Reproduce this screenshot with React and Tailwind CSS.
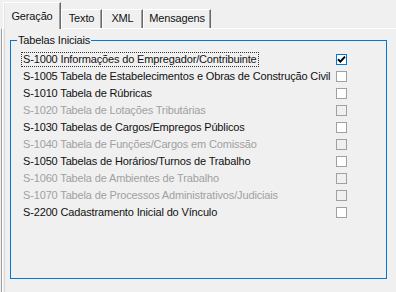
import React from "react";

const rows = [
  { code: "S-1000", label: "Informações do Empregador/Contribuinte", enabled: true, checked: true, focus: true },
  { code: "S-1005", label: "Tabela de Estabelecimentos e Obras de Construção Civil", enabled: true },
  { code: "S-1010", label: "Tabela de Rúbricas", enabled: true },
  { code: "S-1020", label: "Tabela de Lotações Tributárias", enabled: false },
  { code: "S-1030", label: "Tabelas de Cargos/Empregos Públicos", enabled: true },
  { code: "S-1040", label: "Tabela de Funções/Cargos em Comissão", enabled: false },
  { code: "S-1050", label: "Tabelas de Horários/Turnos de Trabalho", enabled: true },
  { code: "S-1060", label: "Tabela de Ambientes de Trabalho", enabled: false },
  { code: "S-1070", label: "Tabela de Processos Administrativos/Judiciais", enabled: false },
  { code: "S-2200", label: "Cadastramento Inicial do Vínculo", enabled: true },
];

function Tab({ children, w }) {
  return (
    <div
      className={`${w} h-[19px] border-t border-l border-white border-r border-r-[#696969] shadow-[inset_-1px_0_0_#a0a0a0] flex items-center justify-center pb-[1px]`}
    >
      {children}
    </div>
  );
}

export default function App() {
  return (
    <div className="w-[396px] h-[292px] bg-[#f0f0f0] overflow-hidden text-[11px] leading-[13px] text-[#111] tracking-[-0.15px] font-['Liberation_Sans',Arial,sans-serif]">
      <div className="h-[28px] flex items-end pl-[3px]">
        <div className="relative z-10 w-[58px] h-[27px] -mb-[1px] bg-[#f0f0f0] border-t border-l border-white border-r border-r-[#696969] shadow-[inset_-1px_0_0_#a0a0a0,inset_1px_0_0_#e3e3e3] flex items-start justify-center pt-[7px]">
          Geração
        </div>
        <Tab w="w-[41px]">Texto</Tab>
        <Tab w="w-[41px]">XML</Tab>
        <Tab w="w-[68px]">Mensagens</Tab>
      </div>
      <div className="ml-[1px] h-[264px] border-t border-t-white border-l border-l-[#a0a0a0]">
        <div className="h-full border-l border-white">
          <div className="h-full ml-[1px] border-l border-[#d8d8d8] pl-[5px] pt-[5px]">
            <fieldset className="w-[377px] h-[245px] border border-[#0078d7] px-0">
              <legend className="ml-[6px] px-[1px] leading-[13px]">Tabelas Iniciais</legend>
              <div className="pt-[4px] pl-[10px] pr-[39px] flex flex-col">
                {rows.map((r) => (
                  <div key={r.code} className="h-[17px] flex items-center">
                    <span
                      className={`px-[1px] leading-[13px] border border-dotted ${r.focus ? "border-[#333]" : "border-transparent"} ${r.enabled ? "text-[#111]" : "text-[#a0a0a0]"}`}
                    >
                      {r.code} {r.label}
                    </span>
                    <span
                      className={`ml-auto -mt-[1px] w-[11px] h-[11px] border flex items-center justify-center ${r.checked ? "border-[#0078d7] bg-white" : r.enabled ? "border-[#a0a0a0] bg-white" : "border-[#a0a0a0] bg-[#f0f0f0]"}`}
                    >
                      {r.checked && (
                        <svg width="9" height="9" viewBox="0 0 9 9">
                          <path d="M1 4.2 L3.4 6.6 L8 1.6" fill="none" stroke="#000" strokeWidth="2" />
                        </svg>
                      )}
                    </span>
                  </div>
                ))}
              </div>
            </fieldset>
          </div>
        </div>
      </div>
    </div>
  );
}
